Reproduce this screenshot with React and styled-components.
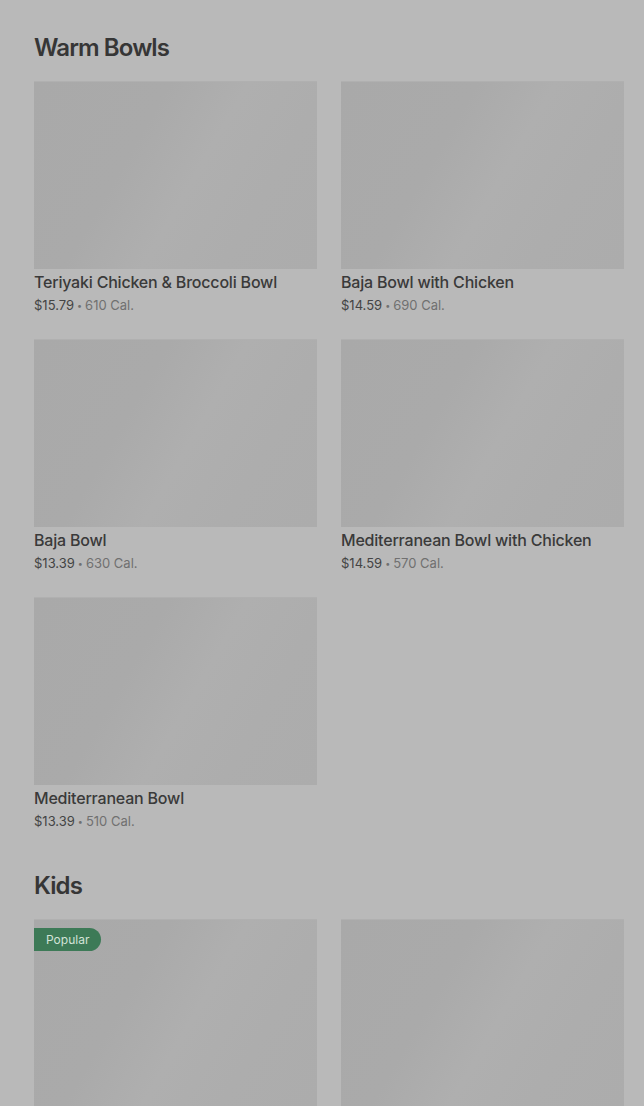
import styled, { createGlobalStyle } from "styled-components";

const GlobalStyle = createGlobalStyle`
    html, body {
        margin: 0;
        padding: 0;
        background: #b9b9b9;
        font-family: Inter, "Noto Sans", sans-serif;
    }
`;

const Page = styled.div`
    padding: 32px 20px 0 34px;
    height: 1106px;
    box-sizing: border-box;
    overflow: hidden;
    background: #b9b9b9;
`;
const Section = styled.section`
    margin-bottom: 39px;
`;
const Heading = styled.h2`
    margin: 0 0 17px;
    font-size: 24px;
    line-height: 32px;
    font-weight: 600;
    letter-spacing: -0.9px;
    color: #363636;
`;
const Grid = styled.div`
    display: grid;
    grid-template-columns: 283px 283px;
    column-gap: 24px;
    row-gap: 24px;
`;
const Card = styled.div`
    display: flex;
    flex-direction: column;
`;
const Thumb = styled.div`
    position: relative;
    height: 188px;
    background: linear-gradient(
        120deg,
        #a9a9a9 0%,
        #aaaaaa 35%,
        #afafaf 55%,
        #adadad 75%,
        #acacac 100%
    );
    border-top: 1px solid #b0b0b0;
    box-sizing: border-box;
`;
const Badge = styled.span`
    position: absolute;
    top: 8px;
    left: 0;
    height: 23px;
    padding: 0 12px;
    display: flex;
    align-items: center;
    background: #3d7a57;
    color: #d3e3d8;
    font-size: 12px;
    border-radius: 0 12px 12px 0;
`;
const Title = styled.div`
    margin-top: 3px;
    height: 20px;
    font-size: 16px;
    line-height: 20px;
    font-weight: 500;
    letter-spacing: -0.2px;
    color: #3a3a3a;
`;
const Meta = styled.div`
    margin-top: 3px;
    height: 20px;
    font-size: 13px;
    line-height: 20px;
    color: #444;
`;
const Dot = styled.span`
    color: #707070;
    font-size: 9px;
    line-height: 0;
    margin: 0 3px;
    vertical-align: 1px;
`;
const Cal = styled.span`
    color: #707070;
`;

const sections = [
    {
        name: "Warm Bowls",
        items: [
            { title: "Teriyaki Chicken & Broccoli Bowl", price: "$15.79", cal: "610 Cal." },
            { title: "Baja Bowl with Chicken", price: "$14.59", cal: "690 Cal." },
            { title: "Baja Bowl", price: "$13.39", cal: "630 Cal." },
            { title: "Mediterranean Bowl with Chicken", price: "$14.59", cal: "570 Cal." },
            { title: "Mediterranean Bowl", price: "$13.39", cal: "510 Cal." },
        ],
    },
    {
        name: "Kids",
        items: [
            { title: "", price: "", cal: "", badge: "Popular" },
            { title: "", price: "", cal: "" },
        ],
    },
];

function MenuCard({ item }) {
    return (
        <Card>
            <Thumb>{item.badge && <Badge>{item.badge}</Badge>}</Thumb>
            {item.title && <Title>{item.title}</Title>}
            {item.price && (
                <Meta>
                    {item.price}
                    <Dot>•</Dot>
                    <Cal>{item.cal}</Cal>
                </Meta>
            )}
        </Card>
    );
}

export default function App() {
    return (
        <>
            <GlobalStyle />
            <Page>
                {sections.map((s) => (
                    <Section key={s.name}>
                        <Heading>{s.name}</Heading>
                        <Grid>
                            {s.items.map((item, i) => (
                                <MenuCard key={i} item={item} />
                            ))}
                        </Grid>
                    </Section>
                ))}
            </Page>
        </>
    );
}
